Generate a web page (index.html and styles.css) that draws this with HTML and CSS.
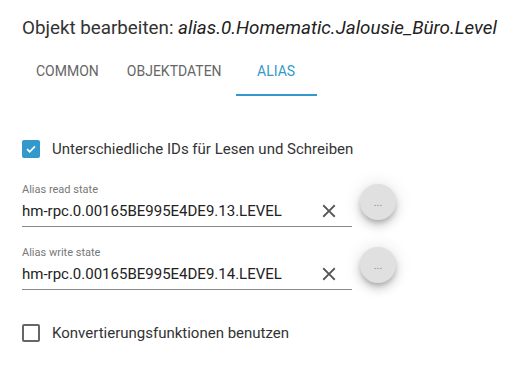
FILE: index.html
```html
<!doctype html>
<html lang="de">
<head>
    <meta charset="utf-8" />
    <meta name="viewport" content="width=device-width,initial-scale=1" />
    <title>Objekt bearbeiten</title>
    <link rel="stylesheet" href="styles.css">
</head>
<body>
    <h2 class="title">Objekt bearbeiten: <i>alias.0.Homematic.Jalousie_Büro.Level</i></h2>

    <div class="tabs">
        <div class="tab">Common</div>
        <div class="tab">Objektdaten</div>
        <div class="tab active">Alias</div>
    </div>

    <div class="content">
        <label class="check">
            <span class="box checked">
                <svg viewBox="0 0 16 16" width="16" height="16"><path d="M3.5 8.2l3 3 6-6.2" fill="none" stroke="#fff" stroke-width="2"/></svg>
            </span>
            Unterschiedliche IDs für Lesen und Schreiben
        </label>

        <div class="field-row">
            <div class="field">
                <div class="field-label">Alias read state</div>
                <div class="field-input">
                    <span class="value">hm-rpc.0.00165BE995E4DE9.13.LEVEL</span>
                    <svg class="clear" viewBox="0 0 24 24" width="22" height="22"><path d="M19 6.41L17.59 5 12 10.59 6.41 5 5 6.41 10.59 12 5 17.59 6.41 19 12 13.41 17.59 19 19 17.59 13.41 12z" fill="#555"/></svg>
                </div>
            </div>
            <button class="fab">...</button>
        </div>

        <div class="field-row">
            <div class="field">
                <div class="field-label">Alias write state</div>
                <div class="field-input">
                    <span class="value">hm-rpc.0.00165BE995E4DE9.14.LEVEL</span>
                    <svg class="clear" viewBox="0 0 24 24" width="22" height="22"><path d="M19 6.41L17.59 5 12 10.59 6.41 5 5 6.41 10.59 12 5 17.59 6.41 19 12 13.41 17.59 19 19 17.59 13.41 12z" fill="#555"/></svg>
                </div>
            </div>
            <button class="fab">...</button>
        </div>

        <label class="check second">
            <span class="box"></span>
            Konvertierungsfunktionen benutzen
        </label>
    </div>
</body>
</html>
```

FILE: styles.css
```css
body { margin:0; font-family: Roboto, "Liberation Sans", Arial, sans-serif; color:#222; background:#fff; }
.title { margin:0; padding:16px 22px 0; height:32px; font-size:18.8px; font-weight:400; line-height:24px; color:#333; white-space:nowrap; }
.title i { color:#222; }
.tabs { display:flex; padding-left:22px; height:48px; }
.tab { display:flex; align-items:center; justify-content:center; min-width:81px; padding:0 14px; box-sizing:border-box; font-size:14px; text-transform:uppercase; color:#666; border-bottom:2px solid transparent; }
.tab.active { color:#3399cc; border-bottom-color:#3399cc; }
.content { padding:0 22px; }
.check { display:flex; align-items:center; gap:12px; font-size:15px; color:#333; }
.check:first-child { margin-top:44px; }
.box { width:14px; height:14px; border:2px solid #666; border-radius:2px; display:flex; align-items:center; justify-content:center; }
.box.checked { background:#3399cc; border-color:#3399cc; }
.field-row { display:flex; align-items:flex-start; gap:8px; margin-top:25px; }
.field-row + .field-row { margin-top:19px; }
.field { width:330px; }
.field-label { font-size:11px; color:#777; line-height:13px; }
.field-input { display:flex; align-items:center; height:30px; border-bottom:1px solid #888; }
.value { flex:1; font-size:15px; color:#222; }
.clear { margin-right:12px; }
.fab { margin-top:1px; width:36px; height:36px; border:none; border-radius:50%; background:#e0e0e0; color:#888; font-size:11px; box-shadow:0 3px 5px -1px rgba(0,0,0,.2), 0 6px 10px 0 rgba(0,0,0,.14), 0 1px 18px 0 rgba(0,0,0,.12); padding:0; font-family:inherit; }
.check.second { margin-top:34px; }
```
